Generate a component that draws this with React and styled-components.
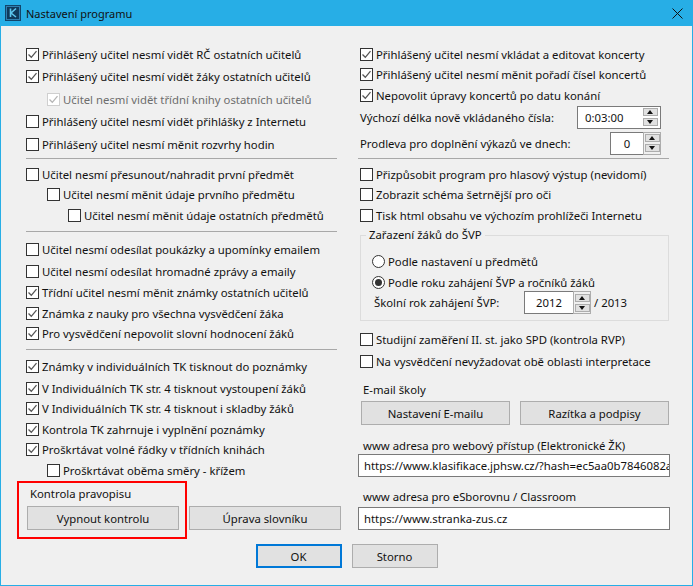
import React from "react";
import styled, { createGlobalStyle } from "styled-components";

const GlobalStyle = createGlobalStyle`
  html, body {
    margin: 0;
    padding: 0;
    background: #f0f0f0;
  }
  * {
    box-sizing: border-box;
  }
`;

// #region styles
const Window = styled.div`
  width: 693px;
  height: 586px;
  display: flex;
  flex-direction: column;
  background: #f0f0f0;
  border: 1px solid #27aee6;
  border-top: none;
  font-family: "Noto Sans", "Open Sans", sans-serif;
  font-size: 11.33px;
  color: #111;
  overflow: hidden;
`;

const TitleBar = styled.div`
  height: 26px;
  flex: none;
  margin: 0 -1px;
  padding: 0 10px 0 5px;
  display: flex;
  align-items: center;
  background: #27aee6;
  font-size: 11px;
`;

const TitleText = styled.span`
  margin-left: 5px;
  flex: 1;
`;

const Columns = styled.div`
  display: grid;
  grid-template-columns: 311px 311px;
  column-gap: 21px;
  padding: 18px 0 0 25px;
`;

const Column = styled.div`
  display: flex;
  flex-direction: column;
`;

const Row = styled.div`
  height: 20px;
  flex: none;
  display: flex;
  align-items: center;
  white-space: nowrap;
  margin-top: ${(props) => props.$mt || 0}px;
  margin-left: ${(props) => (props.$indent || 0) * 21 + (props.$ml || 0)}px;
  color: ${(props) => (props.$disabled ? "#6d6d6d" : "inherit")};
`;

const Box = styled.span`
  width: 13px;
  height: 13px;
  flex: none;
  margin-right: 3px;
  display: flex;
  background: #fff;
  border: 1px solid ${(props) => (props.$disabled ? "#cfcfcf" : "#333")};
`;

const Round = styled.span`
  width: 13px;
  height: 13px;
  flex: none;
  margin-right: 3px;
  display: flex;
  align-items: center;
  justify-content: center;
  background: #fff;
  border: 1px solid #333;
  border-radius: 50%;
`;

const Dot = styled.span`
  width: 7px;
  height: 7px;
  background: #333;
  border-radius: 50%;
`;

const Sep = styled.div`
  height: 1px;
  flex: none;
  background: #a8a8a8;
  margin-top: ${(props) => props.$mt}px;
  margin-bottom: ${(props) => props.$mb || 0}px;
`;

const FieldRow = styled.div`
  display: flex;
  align-items: center;
  justify-content: space-between;
  height: 22px;
  flex: none;
  width: 301px;
  margin-left: 2px;
  margin-top: ${(props) => props.$mt || 0}px;
`;

const SpinBox = styled.div`
  width: ${(props) => props.$w}px;
  height: 23px;
  display: flex;
  border: ${(props) => (props.$framed ? "none" : "1px solid #7a7a7a")};
  background: ${(props) => (props.$framed ? "transparent" : "#fff")};
`;

const SpinValue = styled.div`
  flex: 1;
  display: flex;
  align-items: center;
  justify-content: ${(props) => (props.$framed ? "center" : "flex-start")};
  padding-left: ${(props) => (props.$framed ? 0 : 7)}px;
  background: #fff;
  border: ${(props) => (props.$framed ? "1px solid #7a7a7a" : "none")};
  border-right: none;
`;

const SpinSide = styled.div`
  width: 18px;
  flex: none;
  display: flex;
  flex-direction: column;
  gap: 2px;
  align-items: center;
  justify-content: center;
  background: ${(props) => (props.$framed ? "#f0f0f0" : "#fff")};
  border: ${(props) => (props.$framed ? "1px solid #adadad" : "none")};
  padding-right: ${(props) => (props.$framed ? 0 : 2)}px;
`;

const SpinButton = styled.div`
  width: 15px;
  height: 8px;
  display: flex;
  align-items: center;
  justify-content: center;
  background: #e1e1e1;
  border: 1px solid #adadad;
`;

const Arrow = styled.span`
  width: 0;
  height: 0;
  border-left: 3.5px solid transparent;
  border-right: 3.5px solid transparent;
  border-${(props) => (props.$down ? "top" : "bottom")}: 4px solid #111;
`;

const GroupBox = styled.fieldset`
  margin: 3px 0 0 2px;
  padding: 0 0 0 11px;
  width: 309px;
  height: 93px;
  border: 1px solid #dcdcdc;
  display: flex;
  flex-direction: column;
`;

const GroupTitle = styled.legend`
  margin-left: -6px;
  padding: 0 3px;
  line-height: 14px;
`;

const SchoolRow = styled.div`
  display: flex;
  align-items: center;
  height: 23px;
  margin: -1px 0 0 2px;
`;

const SchoolLabel = styled.span`
  width: 150px;
`;

const YearSuffix = styled.span`
  margin-left: 3px;
`;

const Caption = styled.div`
  height: 16px;
  display: flex;
  align-items: center;
  flex: none;
  margin-left: ${(props) => props.$ml || 5}px;
  margin-top: ${(props) => props.$mt || 0}px;
`;

const ButtonRow = styled.div`
  display: flex;
  gap: 10px;
  margin-left: ${(props) => props.$ml}px;
  margin-top: ${(props) => props.$mt}px;
`;

const Button = styled.div`
  width: ${(props) => props.$w}px;
  height: 24px;
  flex: none;
  display: flex;
  align-items: center;
  justify-content: center;
  background: #e1e1e1;
  border: ${(props) => (props.$primary ? "2px solid #0078d7" : "1px solid #adadad")};
`;

const UrlField = styled.div`
  width: 312px;
  height: 23px;
  flex: none;
  display: flex;
  align-items: center;
  padding: 0 0 0 5px;
  margin-top: ${(props) => props.$mt}px;
  background: #fff;
  border: 1px solid #7a7a7a;
  white-space: nowrap;
  overflow: hidden;
`;

const SpellSection = styled.div`
  position: relative;
  display: flex;
  flex-direction: column;
  padding-top: 5px;
`;

const RedFrame = styled.div`
  position: absolute;
  left: -9px;
  top: 1px;
  width: 170px;
  height: 58px;
  border: 2px solid #f00;
  pointer-events: none;
`;

const Footer = styled.div`
  display: flex;
  justify-content: center;
  gap: 10px;
  margin-top: 14px;
`;
// #endregion

const Check = ({ disabled }) => (
  <svg width="11" height="11" viewBox="0 0 11 11">
    <path d="M1.5 5.5 L4.3 8.3 L9.5 2.2" fill="none" stroke={disabled ? "#b5b5b5" : "#555"} strokeWidth="1.3" />
  </svg>
);

const CheckRow = ({ label, checked, disabled, indent, mt, ml }) => (
  <Row $mt={mt} $ml={ml} $indent={indent} $disabled={disabled}>
    <Box $disabled={disabled}>{checked && <Check disabled={disabled} />}</Box>
    {label}
  </Row>
);

const Spinner = ({ value, width, framed }) => (
  <SpinBox $w={width} $framed={framed}>
    <SpinValue $framed={framed}>{value}</SpinValue>
    <SpinSide $framed={framed}>
      <SpinButton>
        <Arrow />
      </SpinButton>
      <SpinButton>
        <Arrow $down />
      </SpinButton>
    </SpinSide>
  </SpinBox>
);

const Logo = () => (
  <svg width="16" height="16" viewBox="0 0 16 16">
    <rect width="16" height="16" fill="#12456b" />
    <rect x="1.5" y="1.5" width="13" height="13" fill="#0f3a5c" stroke="#2f7fb0" />
    <path d="M5.5 3.5 V12 M11 3.5 L6 8 L11 12" fill="none" stroke="#5cc6ee" strokeWidth="1.6" />
  </svg>
);

const Close = () => (
  <svg width="11" height="11" viewBox="0 0 11 11">
    <path d="M0.5 0.5 L10.5 10.5 M10.5 0.5 L0.5 10.5" fill="none" stroke="#111" strokeWidth="1" />
  </svg>
);

const groupA = [
  { label: "Přihlášený učitel nesmí vidět RČ ostatních učitelů", checked: true },
  { label: "Přihlášený učitel nesmí vidět žáky ostatních učitelů", checked: true, mt: 2 },
  { label: "Učitel nesmí vidět třídní knihy ostatních učitelů", checked: true, disabled: true, indent: 1, mt: 3 },
  { label: "Přihlášený učitel nesmí vidět přihlášky z Internetu", mt: 2 },
  { label: "Přihlášený učitel nesmí měnit rozvrhy hodin", mt: 3 },
];

const groupB = [
  { label: "Učitel nesmí přesunout/nahradit první předmět", mt: 5 },
  { label: "Učitel nesmí měnit údaje prvního předmětu", indent: 1 },
  { label: "Učitel nesmí měnit údaje ostatních předmětů", indent: 2, mt: 1 },
];

const groupC = [
  { label: "Učitel nesmí odesílat poukázky a upomínky emailem", mt: 7 },
  { label: "Učitel nesmí odesílat hromadné zprávy a emaily", mt: 2 },
  { label: "Třídní učitel nesmí měnit známky ostatních učitelů", checked: true, mt: 1 },
  { label: "Známka z nauky pro všechna vysvědčení žáka", checked: true, mt: 1 },
  { label: "Pro vysvědčení nepovolit slovní hodnocení žáků", checked: true },
];

const groupD = [
  { label: "Známky v individuálních TK tisknout do poznámky", checked: true, mt: 6 },
  { label: "V Individuálních TK str. 4 tisknout vystoupení žáků", checked: true, mt: 2 },
  { label: "V Individuálních TK str. 4 tisknout i skladby žáků", checked: true },
  { label: "Kontrola TK zahrnuje i vyplnění poznámky", checked: true, mt: 1 },
  { label: "Proškrtávat volné řádky v třídních knihách", checked: true },
  { label: "Proškrtávat oběma směry - křížem", indent: 1, mt: 1 },
];

const concerts = [
  { label: "Přihlášený učitel nesmí vkládat a editovat koncerty", checked: true, ml: 2 },
  { label: "Přihlášený učitel nesmí měnit pořadí čísel koncertů", checked: true, ml: 2 },
  { label: "Nepovolit úpravy koncertů po datu konání", checked: true, ml: 2, mt: 1 },
];

const display = [
  { label: "Přizpůsobit program pro hlasový výstup (nevidomí)", ml: 2, mt: 5 },
  { label: "Zobrazit schéma šetrnější pro oči", ml: 2 },
  { label: "Tisk html obsahu ve výchozím prohlížeči Internetu", ml: 2, mt: 1 },
];

const renderRows = (rows) => rows.map((row) => <CheckRow key={row.label} {...row} />);

const App = () => (
  <Window>
    <GlobalStyle />
    <TitleBar>
      <Logo />
      <TitleText>Nastavení programu</TitleText>
      <Close />
    </TitleBar>

    <Columns>
      <Column>
        {renderRows(groupA)}
        <Sep $mt={4} />
        {renderRows(groupB)}
        <Sep $mt={6} />
        {renderRows(groupC)}
        <Sep $mt={6} />
        {renderRows(groupD)}
        <SpellSection>
          <RedFrame />
          <Caption $ml={4}>Kontrola pravopisu</Caption>
          <ButtonRow $ml={1} $mt={5}>
            <Button $w={152}>Vypnout kontrolu</Button>
            <Button $w={152}>Úprava slovníku</Button>
          </ButtonRow>
        </SpellSection>
      </Column>

      <Column>
        {renderRows(concerts)}
        <FieldRow $mt={1}>
          Výchozí délka nově vkládaného čísla:
          <Spinner value="0:03:00" width={84} />
        </FieldRow>
        <FieldRow $mt={4}>
          Prodleva pro doplnění výkazů ve dnech:
          <Spinner value="0" width={51} framed />
        </FieldRow>
        <Sep $mt={4} />
        {renderRows(display)}
        <GroupBox>
          <GroupTitle>Zařazení žáků do ŠVP</GroupTitle>
          <Row $mt={9}>
            <Round />
            Podle nastavení u předmětů
          </Row>
          <Row $mt={1}>
            <Round>
              <Dot />
            </Round>
            Podle roku zahájení ŠVP a ročníků žáků
          </Row>
          <SchoolRow>
            <SchoolLabel>Školní rok zahájení ŠVP:</SchoolLabel>
            <Spinner value="2012" width={67} framed />
            <YearSuffix>/ 2013</YearSuffix>
          </SchoolRow>
        </GroupBox>
        <CheckRow label="Studijní zaměření II. st. jako SPD (kontrola RVP)" ml={2} mt={8} />
        <CheckRow label="Na vysvědčení nevyžadovat obě oblasti interpretace" ml={2} mt={2} />
        <Caption $mt={10}>E-mail školy</Caption>
        <ButtonRow $ml={3} $mt={4}>
          <Button $w={149}>Nastavení E-mailu</Button>
          <Button $w={149}>Razítka a podpisy</Button>
        </ButtonRow>
        <Caption $mt={12}>www adresa pro webový přístup (Elektronické ŽK)</Caption>
        <UrlField $mt={1}>https://www.klasifikace.jphsw.cz/?hash=ec5aa0b7846082a</UrlField>
        <Caption $mt={11}>www adresa pro eSborovnu / Classroom</Caption>
        <UrlField $mt={3}>https://www.stranka-zus.cz</UrlField>
      </Column>
    </Columns>

    <Footer>
      <Button $w={86} $primary>
        OK
      </Button>
      <Button $w={86}>Storno</Button>
    </Footer>
  </Window>
);

export default App;
